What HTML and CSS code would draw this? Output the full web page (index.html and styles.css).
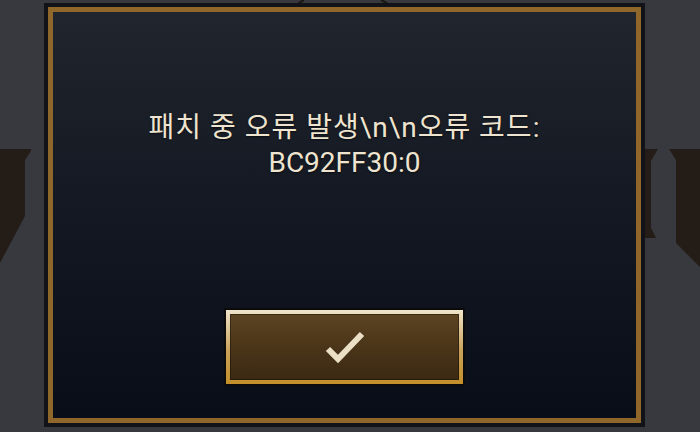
FILE: index.html
```html
<!DOCTYPE html>
<html lang="ko">
<head>
    <meta charset="UTF-8">
    <meta name="viewport" content="width=700, height=432, initial-scale=1.0">
    <title>패치 오류</title>
    <link rel="stylesheet" href="styles.css">
</head>
<body>
    <div class="scene">
        <!-- 뒤쪽 로고 조각 -->
        <svg class="backdrop" width="700" height="432" viewBox="0 0 700 432">
            <polygon points="0,149 31,149 31,151 25,160 25,216 0,263" fill="#241d17"/>
            <polygon points="645,149 658,149 651,161 651,228 656,238 645,238" fill="#241d17"/>
            <polygon points="669,149 700,149 700,267 676,243 676,160" fill="#241d17"/>
            <path d="M298 4 Q301 1 304 0" stroke="#1c1712" stroke-width="2" fill="none"/>
            <path d="M381 0 Q385 2 388 4" stroke="#1c1712" stroke-width="2" fill="none"/>
        </svg>

        <div class="dialog">
            <div class="dialog-inner">
                <p class="message">
                    <span class="message-line wide">패치 중 오류 발생\n\n오류 코드:</span>
                    <span class="message-line">BC92FF30:0</span>
                </p>
                <button class="confirm">
                    <span class="confirm-face">
                        <svg class="check" width="40" height="34" viewBox="0 0 40 34">
                            <path d="M3 19 L13 29 L37 4" stroke="#ebe0c6" stroke-width="6" fill="none"/>
                        </svg>
                    </span>
                </button>
            </div>
        </div>
    </div>
</body>
</html>
```
FILE: styles.css
```css
body {
    margin: 0;
    padding: 0;
    overflow: hidden;
    background-color: #37393e;
    font-family: Roboto, "Noto Sans CJK KR", sans-serif;
}

.scene {
    position: relative;
    width: 700px;
    height: 432px;
    padding: 3px 0 0 44px;
    box-sizing: border-box;
}

.backdrop {
    position: absolute;
    top: 0;
    left: 0;
}

.dialog {
    position: relative;
    width: 601px;
    height: 424px;
    box-sizing: border-box;
    border: 4px solid #111318;
}

.dialog-inner {
    height: 100%;
    box-sizing: border-box;
    border: 5px solid #8f672b;
    background: linear-gradient(180deg, #21252d 0%, #141923 45%, #080d18 100%);
    display: flex;
    flex-direction: column;
    align-items: center;
    padding: 98px 0 32px;
}

.message {
    margin: 0;
    font-size: 28px;
    line-height: 35px;
    color: #eee4cf;
    text-align: center;
    text-shadow: 0 1px 2px rgba(0, 0, 0, 0.6);
}

.message-line {
    display: block;
    white-space: nowrap;
}

.message-line.wide {
    letter-spacing: 1px;
}

.confirm {
    margin-top: auto;
    width: 241px;
    height: 78px;
    padding: 4px;
    box-sizing: border-box;
    border: 2px solid #0b0b0c;
    background: linear-gradient(180deg, #efe4ca 0%, #c9a25a 55%, #c38f2a 100%);
    cursor: pointer;
    outline: none;
}

.confirm-face {
    display: flex;
    align-items: center;
    justify-content: center;
    width: 100%;
    height: 100%;
    background: linear-gradient(180deg, #5d4421 0%, #4a3519 50%, #3b2913 100%);
    box-shadow: inset 0 0 0 1px rgba(0, 0, 0, 0.35);
}

.check {
    display: block;
}
```
